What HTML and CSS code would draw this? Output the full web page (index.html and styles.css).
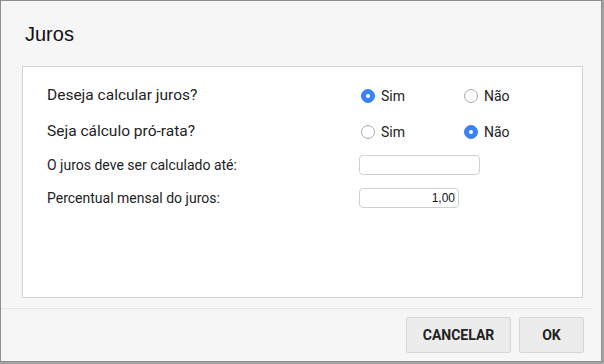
FILE: index.html
```html
<!DOCTYPE html>
<html>
<head>
    <title>Juros</title>
    <link rel="stylesheet" href="styles.css">
</head>
<body>
    <div class="dialog">
        <div class="dialog-header">
            <h1>Juros</h1>
        </div>
        <div class="panel">
            <div class="row first">
                <div class="label big">Deseja calcular juros?</div>
                <div class="options">
                    <label class="option"><span class="radio checked"></span>Sim</label>
                    <label class="option"><span class="radio"></span>Não</label>
                </div>
            </div>
            <div class="row">
                <div class="label big">Seja cálculo pró-rata?</div>
                <div class="options">
                    <label class="option"><span class="radio"></span>Sim</label>
                    <label class="option"><span class="radio checked"></span>Não</label>
                </div>
            </div>
            <div class="row short">
                <div class="label">O juros deve ser calculado até:</div>
                <div><input type="text" class="field date-field"></div>
            </div>
            <div class="row short">
                <div class="label">Percentual mensal do juros:</div>
                <div><input type="text" class="field number-field" value="1,00"></div>
            </div>
        </div>
        <div class="dialog-footer">
            <button class="btn cancel-btn">CANCELAR</button>
            <button class="btn ok-btn">OK</button>
        </div>
    </div>
</body>
</html>
```

FILE: styles.css
```css
body {
    margin: 0;
    background-color: #a2a2a2;
    font-family: Roboto, "Liberation Sans", sans-serif;
}

.dialog {
    width: 600px;
    height: 360px;
    background-color: #f6f6f6;
    border: 1px solid #8e8e8e;
    display: flex;
    flex-direction: column;
}

.dialog-header {
    height: 65px;
    box-sizing: border-box;
    padding: 22px 0 0 24px;
}

.dialog-header h1 {
    margin: 0;
    font-family: "Liberation Sans", Arial, sans-serif;
    font-weight: normal;
    font-size: 20px;
    line-height: 22px;
    color: #111;
}

.panel {
    width: 559px;
    height: 220px;
    margin-left: 21px;
    background-color: #fff;
    border: 1px solid #d2d2d2;
    padding-top: 10px;
}

.row {
    display: grid;
    grid-template-columns: 312px 1fr;
    align-items: center;
    height: 35px;
    padding-left: 24px;
    font-size: 14px;
    color: #222;
}

.row.first {
    height: 36px;
}

.row.short {
    height: 33px;
}

.label.big {
    font-size: 15.5px;
}

.options {
    display: flex;
    padding-left: 2px;
    padding-top: 2px;
}

.option {
    width: 103px;
    display: flex;
    align-items: center;
    gap: 6px;
    font-size: 14px;
    color: #222;
}

.radio {
    width: 12px;
    height: 12px;
    border: 1px solid #a9a9a9;
    border-radius: 50%;
    background-color: #fff;
    display: flex;
    justify-content: center;
    align-items: center;
}

.radio.checked {
    background-color: #3a82f7;
    border-color: #3a82f7;
}

.radio.checked::after {
    content: "";
    width: 4px;
    height: 4px;
    border-radius: 50%;
    background-color: #fff;
}

.field {
    display: block;
    height: 20px;
    box-sizing: border-box;
    border: 1px solid #cfcfcf;
    border-radius: 4px;
    padding: 0 3px;
    font-family: "Liberation Sans", Arial, sans-serif;
    font-size: 12px;
    color: #111;
    background-color: #fff;
}

.date-field {
    width: 121px;
}

.number-field {
    width: 100px;
    text-align: right;
}

.dialog-footer {
    margin-top: 10px;
    margin-right: 9px;
    border-top: 1px solid #e3e3e3;
    display: flex;
    justify-content: flex-end;
    gap: 8px;
    padding: 8px 8px 0 0;
}

.btn {
    height: 36px;
    background-color: #ececec;
    border: 1px solid #d6d6d6;
    border-radius: 2px;
    font-family: Roboto, "Liberation Sans", sans-serif;
    font-weight: bold;
    font-size: 14px;
    color: #222;
    cursor: pointer;
}

.cancel-btn {
    width: 105px;
}

.ok-btn {
    width: 65px;
}
```
